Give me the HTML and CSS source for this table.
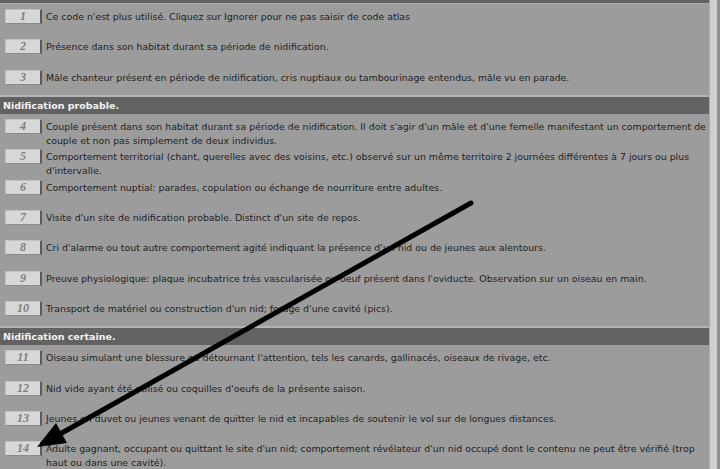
FILE: index.html
```html
<!DOCTYPE html>
<html lang="fr">
<head>
<meta charset="utf-8">
<title>Codes atlas</title>
<link rel="stylesheet" href="styles.css">
</head>
<body>
<div class="frame">
  <div class="panel">
    <div class="group-head cut"></div>
    <div class="row"><span class="code">1</span><p class="desc">Ce code n'est plus utilisé. Cliquez sur Ignorer pour ne pas saisir de code atlas</p></div>
    <div class="row"><span class="code">2</span><p class="desc">Présence dans son habitat durant sa période de nidification.</p></div>
    <div class="row"><span class="code">3</span><p class="desc">Mâle chanteur présent en période de nidification, cris nuptiaux ou tambourinage entendus, mâle vu en parade.</p></div>
    <div class="group-head">Nidification probable.</div>
    <div class="row"><span class="code">4</span><p class="desc">Couple présent dans son habitat durant sa période de nidification. Il doit s'agir d'un mâle et d'une femelle manifestant un comportement de couple et non pas simplement de deux individus.</p></div>
    <div class="row"><span class="code">5</span><p class="desc">Comportement territorial (chant, querelles avec des voisins, etc.) observé sur un même territoire 2 journées différentes à 7 jours ou plus d'intervalle.</p></div>
    <div class="row"><span class="code">6</span><p class="desc">Comportement nuptial: parades, copulation ou échange de nourriture entre adultes.</p></div>
    <div class="row"><span class="code">7</span><p class="desc">Visite d'un site de nidification probable. Distinct d'un site de repos.</p></div>
    <div class="row"><span class="code">8</span><p class="desc">Cri d'alarme ou tout autre comportement agité indiquant la présence d'un nid ou de jeunes aux alentours.</p></div>
    <div class="row"><span class="code">9</span><p class="desc">Preuve physiologique: plaque incubatrice très vascularisée ou oeuf présent dans l'oviducte. Observation sur un oiseau en main.</p></div>
    <div class="row"><span class="code">10</span><p class="desc">Transport de matériel ou construction d'un nid; forage d'une cavité (pics).</p></div>
    <div class="group-head">Nidification certaine.</div>
    <div class="row"><span class="code">11</span><p class="desc">Oiseau simulant une blessure ou détournant l'attention, tels les canards, gallinacés, oiseaux de rivage, etc.</p></div>
    <div class="row"><span class="code">12</span><p class="desc">Nid vide ayant été utilisé ou coquilles d'oeufs de la présente saison.</p></div>
    <div class="row"><span class="code">13</span><p class="desc">Jeunes en duvet ou jeunes venant de quitter le nid et incapables de soutenir le vol sur de longues distances.</p></div>
    <div class="row"><span class="code">14</span><p class="desc">Adulte gagnant, occupant ou quittant le site d'un nid; comportement révélateur d'un nid occupé dont le contenu ne peut être vérifié (trop haut ou dans une cavité).</p></div>
  </div>
  <div class="edge"></div>
</div>
<svg class="arrow" width="720" height="469" viewBox="0 0 720 469" aria-hidden="true">
  <line x1="471" y1="203" x2="60" y2="434" stroke="#000" stroke-width="5" stroke-linecap="round"/>
  <polygon points="37,447 67,443 56,423" fill="#000"/>
</svg>
</body>
</html>
```

FILE: styles.css
```css
html, body {
  margin: 0;
  padding: 0;
  height: 100%;
  overflow: hidden;
}
body {
  background: #2a2a2a;
  font-family: "DejaVu Sans", Verdana, sans-serif;
  position: relative;
}
.frame {
  display: flex;
  height: 469px;
}
.panel {
  width: 709px;
  background: #9c9c9c;
  display: flex;
  flex-direction: column;
}
.edge {
  width: 7px;
  background: #cfcfcf;
  border-left: 1px solid #ababab;
  border-right: 3px solid #8e8e8e;
}
.group-head {
  flex: none;
  height: 17px;
  border-top: 2px solid #b4b4b4;
  background: #626262;
  color: #f2f2f2;
  font-weight: bold;
  font-size: 9.5px;
  line-height: 17px;
  padding-left: 3px;
}
.group-head.cut {
  height: 3px;
  border-top: none;
  border-bottom: 1px solid #a8a8a8;
}
.row {
  flex: none;
  height: 30.33px;
  box-sizing: border-box;
  padding: 5px 0 0 5px;
  display: flex;
  align-items: flex-start;
  gap: 4px;
}
.code {
  flex: none;
  width: 34px;
  height: 13px;
  background: #d7d7d7;
  border: 1px solid #c2c2c2;
  border-right: 2px solid #5a5a5a;
  border-bottom: 1px solid #8a8a8a;
  color: #7e7e7e;
  font-family: "Liberation Serif", "Times New Roman", serif;
  font-style: italic;
  font-weight: bold;
  font-size: 12px;
  line-height: 13px;
  text-align: center;
}
.desc {
  margin: 0;
  padding-top: 1px;
  color: #1e1e1e;
  font-size: 9.4px;
  line-height: 14px;
  flex: 1;
}
.arrow {
  position: absolute;
  top: 0;
  left: 0;
  pointer-events: none;
}
```
